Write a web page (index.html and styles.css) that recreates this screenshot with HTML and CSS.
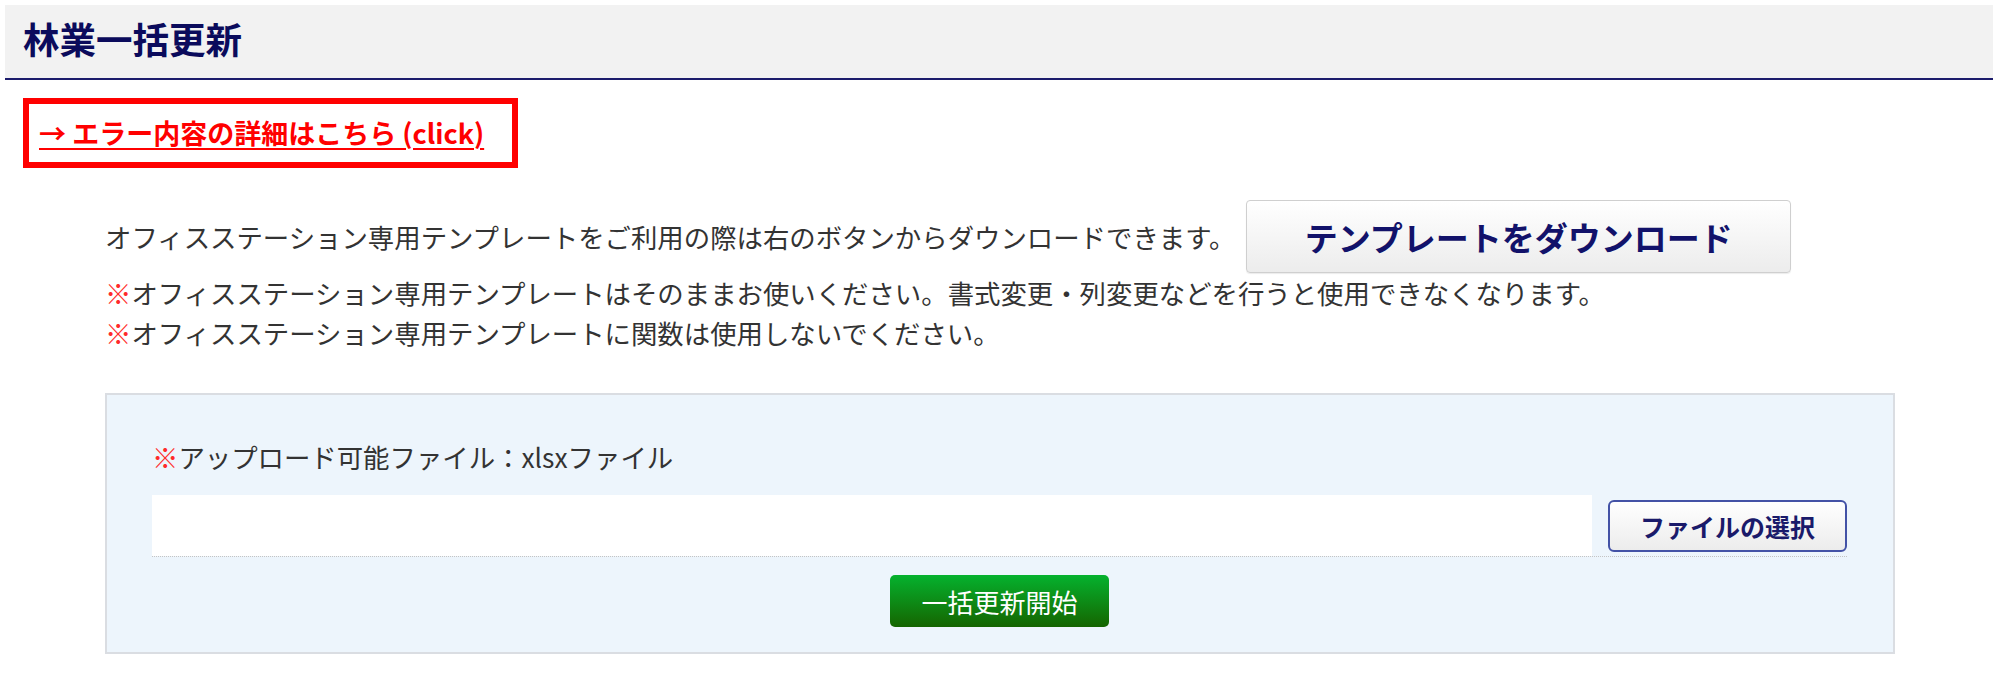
FILE: index.html
```html
<!DOCTYPE html>
<html lang="ja">
<head>
  <meta charset="UTF-8" />
  <title>林業一括更新</title>
  <meta name="viewport" content="width=device-width, initial-scale=1" />
  <link rel="stylesheet" href="styles.css">
</head>
<body>

  <!-- Page title -->
  <div class="page-head">
    <h1>林業一括更新</h1>
  </div>

  <!-- Error link -->
  <div class="error-box">
    <a href="#" class="error-link">→ エラー内容の詳細はこちら (click)</a>
  </div>

  <main>
    <div class="template-row">
      <p>オフィスステーション専用テンプレートをご利用の際は右のボタンからダウンロードできます。</p>
      <button class="download-btn">テンプレートをダウンロード</button>
    </div>
    <p class="note"><span class="mark">※</span>オフィスステーション専用テンプレートはそのままお使いください。書式変更・列変更などを行うと使用できなくなります。</p>
    <p class="note"><span class="mark">※</span>オフィスステーション専用テンプレートに関数は使用しないでください。</p>

    <div class="upload-panel">
      <p class="upload-label"><span class="mark">※</span>アップロード可能ファイル：xlsxファイル</p>
      <div class="file-row">
        <input type="text" class="file-name" readonly />
        <button class="select-btn">ファイルの選択</button>
      </div>
      <button class="start-btn">一括更新開始</button>
    </div>
  </main>

</body>
</html>
```

FILE: styles.css
```css
body {
  font-family: "Noto Sans CJK JP", "Noto Sans", sans-serif;
  margin: 0;
  background-color: #fff;
  color: #333;
}

p {
  margin: 0;
}

button, input {
  font-family: inherit;
}

/* Page title bar */
.page-head {
  margin: 5px 7px 0 5px;
  height: 73px;
  background-color: #f2f2f2;
  border-bottom: 2px solid #1c1c6c;
  display: flex;
  align-items: center;
  padding-left: 18px;
}
.page-head h1 {
  margin: 0;
  font-size: 36.5px;
  font-weight: 700;
  color: #0b0b5c;
  line-height: 1;
  margin-top: -4px;
}

/* Error link box */
.error-box {
  display: inline-block;
  margin: 18px 0 0 23px;
  border: 6px solid #ff0000;
  height: 58px;
  padding: 0 28px 0 10px;
  line-height: 58px;
}
.error-link {
  color: #f00;
  font-size: 27px;
  font-weight: 700;
  text-decoration: underline;
  text-underline-offset: 4px;
  text-decoration-thickness: 2px;
}

main {
  padding: 0 105px;
}

.template-row {
  display: flex;
  align-items: center;
  margin-top: 32px;
  height: 73px;
}
.template-row p {
  font-size: 26.4px;
  line-height: 40px;
}

.download-btn {
  margin-left: 11px;
  width: 545px;
  height: 73px;
  border: 1px solid #cfcfcf;
  border-radius: 4px;
  background: linear-gradient(#ffffff, #ececec);
  color: #12126a;
  font-size: 33px;
  font-weight: 700;
  box-shadow: 0 1px 1px rgb(0 0 0 / 0.08);
  cursor: pointer;
}

.note {
  font-size: 26.4px;
  line-height: 40px;
}

.mark {
  color: #ff2a2a;
}

/* Upload panel */
.upload-panel {
  margin-top: 40px;
  background-color: #edf5fc;
  border: 2px solid #dadde2;
  padding: 42px 46px 25px 45px;
}

.upload-label {
  font-size: 26.4px;
  line-height: 40px;
}

.file-row {
  display: flex;
  align-items: center;
  gap: 16px;
  margin-top: 18px;
  border-bottom: 1px dotted #c4c4c4;
}

.file-name {
  flex: 1;
  height: 61px;
  border: none;
  background: #fff;
  padding: 0;
  outline: none;
}

.select-btn {
  width: 239px;
  height: 52px;
  border: 2px solid #4352a6;
  border-radius: 6px;
  background: linear-gradient(#ffffff, #ececec);
  color: #1a1a6a;
  font-size: 25px;
  font-weight: 700;
  cursor: pointer;
}

.start-btn {
  display: block;
  margin: 18px auto 0;
  width: 219px;
  height: 52px;
  border: none;
  border-radius: 5px;
  background: linear-gradient(#05b22e, #156500);
  color: #fff;
  font-size: 26px;
  cursor: pointer;
}
```
